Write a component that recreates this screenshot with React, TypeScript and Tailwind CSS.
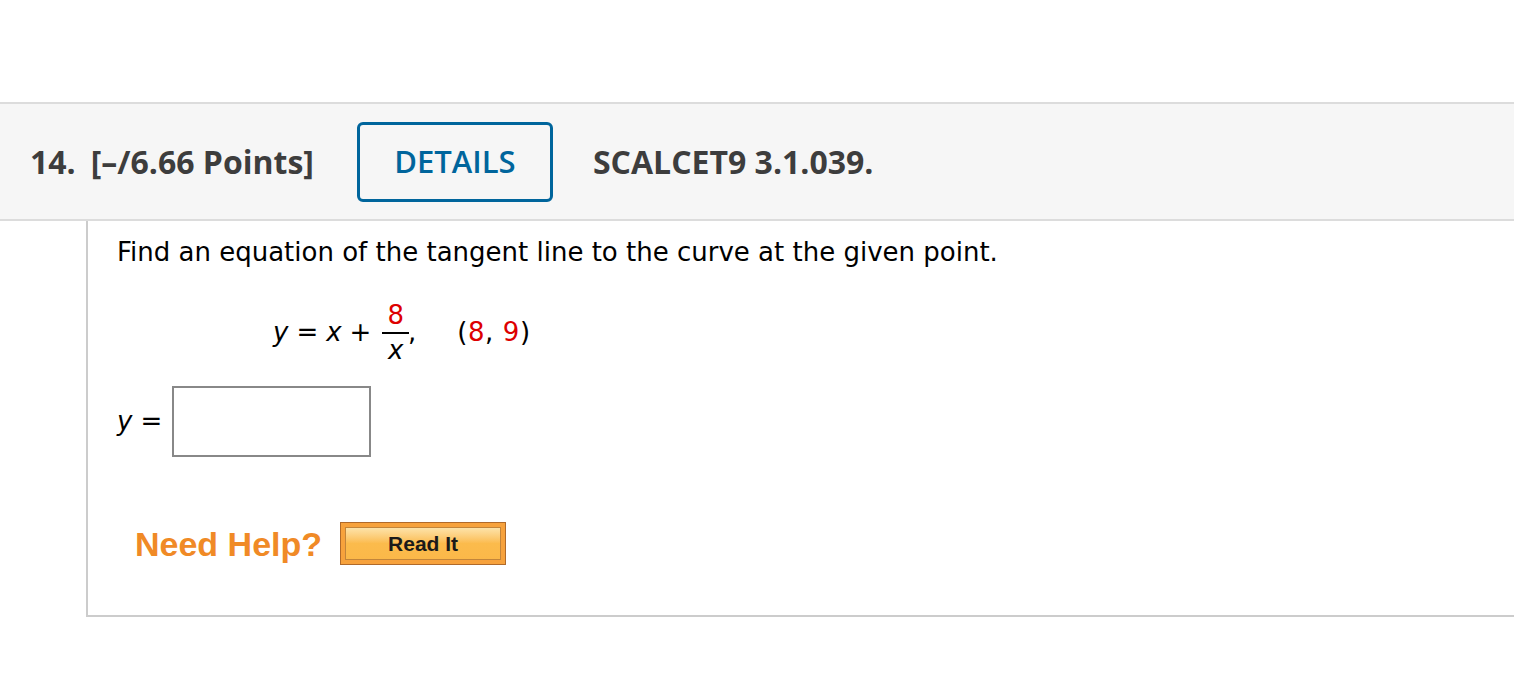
import React from 'react'

const Fraction = () => (
  <span className="inline-flex flex-col items-center align-middle mx-[3px] leading-none">
    <span className="text-[#dd0000] px-[5px] pb-[4px]">8</span>
    <span className="block w-full h-[2px] bg-black"></span>
    <span className="italic pt-[3px]">x</span>
  </span>
)

const App = () => {
  return (
    <div className="w-[1514px] h-[696px] bg-white pt-[102px]">
      <div className="h-[119px] bg-[#f6f6f6] border-y-2 border-[#dcdcdc] flex items-center pl-[30px] font-['Open_Sans',sans-serif] font-bold text-[32px] text-[#3d3d3d]">
        <span>14.</span>
        <span className="ml-[15px]">[–/6.66 Points]</span>
        <button className="ml-[43px] w-[196px] h-[80px] border-[3px] border-[#00659c] rounded-[6px] text-[#00659c] font-semibold text-[31px]">
          DETAILS
        </button>
        <span className="ml-[40px]">SCALCET9 3.1.039.</span>
      </div>
      <div className="ml-[86px] border-l-2 border-b-2 border-[#cccccc] h-[396px] pl-[29px] pt-[13px] font-['DejaVu_Sans',Verdana,sans-serif] text-[26px] text-black">
        <p className="leading-[36px]">Find an equation of the tangent line to the curve at the given point.</p>
        <div className="mt-[22px] pl-[156px] flex items-center h-[80px]">
          <span className="italic">y</span>
          <span className="mx-[8px]">=</span>
          <span className="italic">x</span>
          <span className="mx-[8px]">+</span>
          <Fraction />
          <span className="-ml-[4px]">,</span>
          <span className="ml-[41px] tracking-[0.6px]">
            (<span className="text-[#dd0000]">8</span>, <span className="text-[#dd0000]">9</span>)
          </span>
        </div>
        <div className="mt-[14px] flex items-center">
          <span className="italic">y</span>
          <span className="ml-[8px]">=</span>
          <input
            type="text"
            className="ml-[10px] w-[199px] h-[71px] border-2 border-[#888888] bg-white outline-none"
          />
        </div>
        <div className="mt-[65px] flex items-center font-['Liberation_Sans',Arial,sans-serif]">
          <span className="text-[#f08a26] font-bold text-[34px] ml-[18px] leading-none">Need Help?</span>
          <button className="ml-[18px] w-[166px] h-[43px] border border-[#b06a2a] bg-[#f7a23c] p-[4px]">
            <span className="flex items-center justify-center w-full h-full border border-[#c2853a] bg-gradient-to-b from-[#fde3a8] via-[#fbbb4c] to-[#fbb849] text-[#1a1a1a] font-bold text-[21px]">
              Read It
            </span>
          </button>
        </div>
      </div>
    </div>
  )
}

export default App
